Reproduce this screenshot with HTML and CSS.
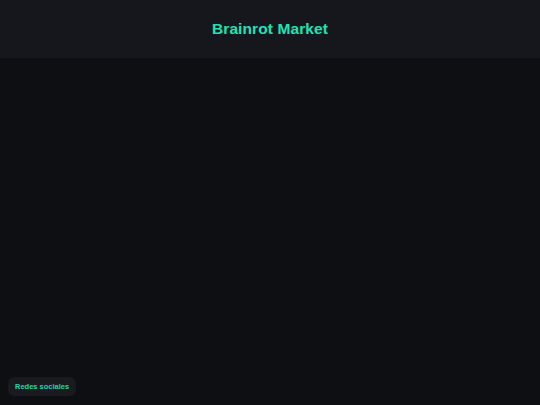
FILE: index.html
```html
<!DOCTYPE html>
<html lang="es">
<head>
<meta charset="utf-8">
<title>Brainrot Market</title>
<link rel="stylesheet" href="styles.css">
</head>
<body>
<header class="topbar">
  <h1 class="brand">Brainrot Market</h1>
</header>
<main class="content"></main>
<footer class="footer">
  <button class="social-btn" type="button">Redes sociales</button>
</footer>
</body>
</html>
```
FILE: styles.css
```css
html, body {
  margin: 0;
  padding: 0;
  height: 100%;
}
body {
  background: #0e0f13;
  font-family: "Liberation Sans", Arial, sans-serif;
  display: flex;
  flex-direction: column;
}
.topbar {
  height: 58px;
  background: #16171c;
  display: flex;
  align-items: center;
  justify-content: center;
  flex-shrink: 0;
}
.brand {
  margin: 0;
  font-size: 15.5px;
  font-weight: 700;
  color: #1de4b5;
  letter-spacing: 0.1px;
}
.content {
  flex: 1;
}
.footer {
  padding: 0 0 9px 8px;
}
.social-btn {
  background: #1a1b21;
  border: none;
  border-radius: 7px;
  color: #1fd6aa;
  font-family: "Liberation Sans", Arial, sans-serif;
  font-weight: 700;
  font-size: 7.5px;
  height: 19px;
  padding: 0 7px;
  cursor: pointer;
}
```
